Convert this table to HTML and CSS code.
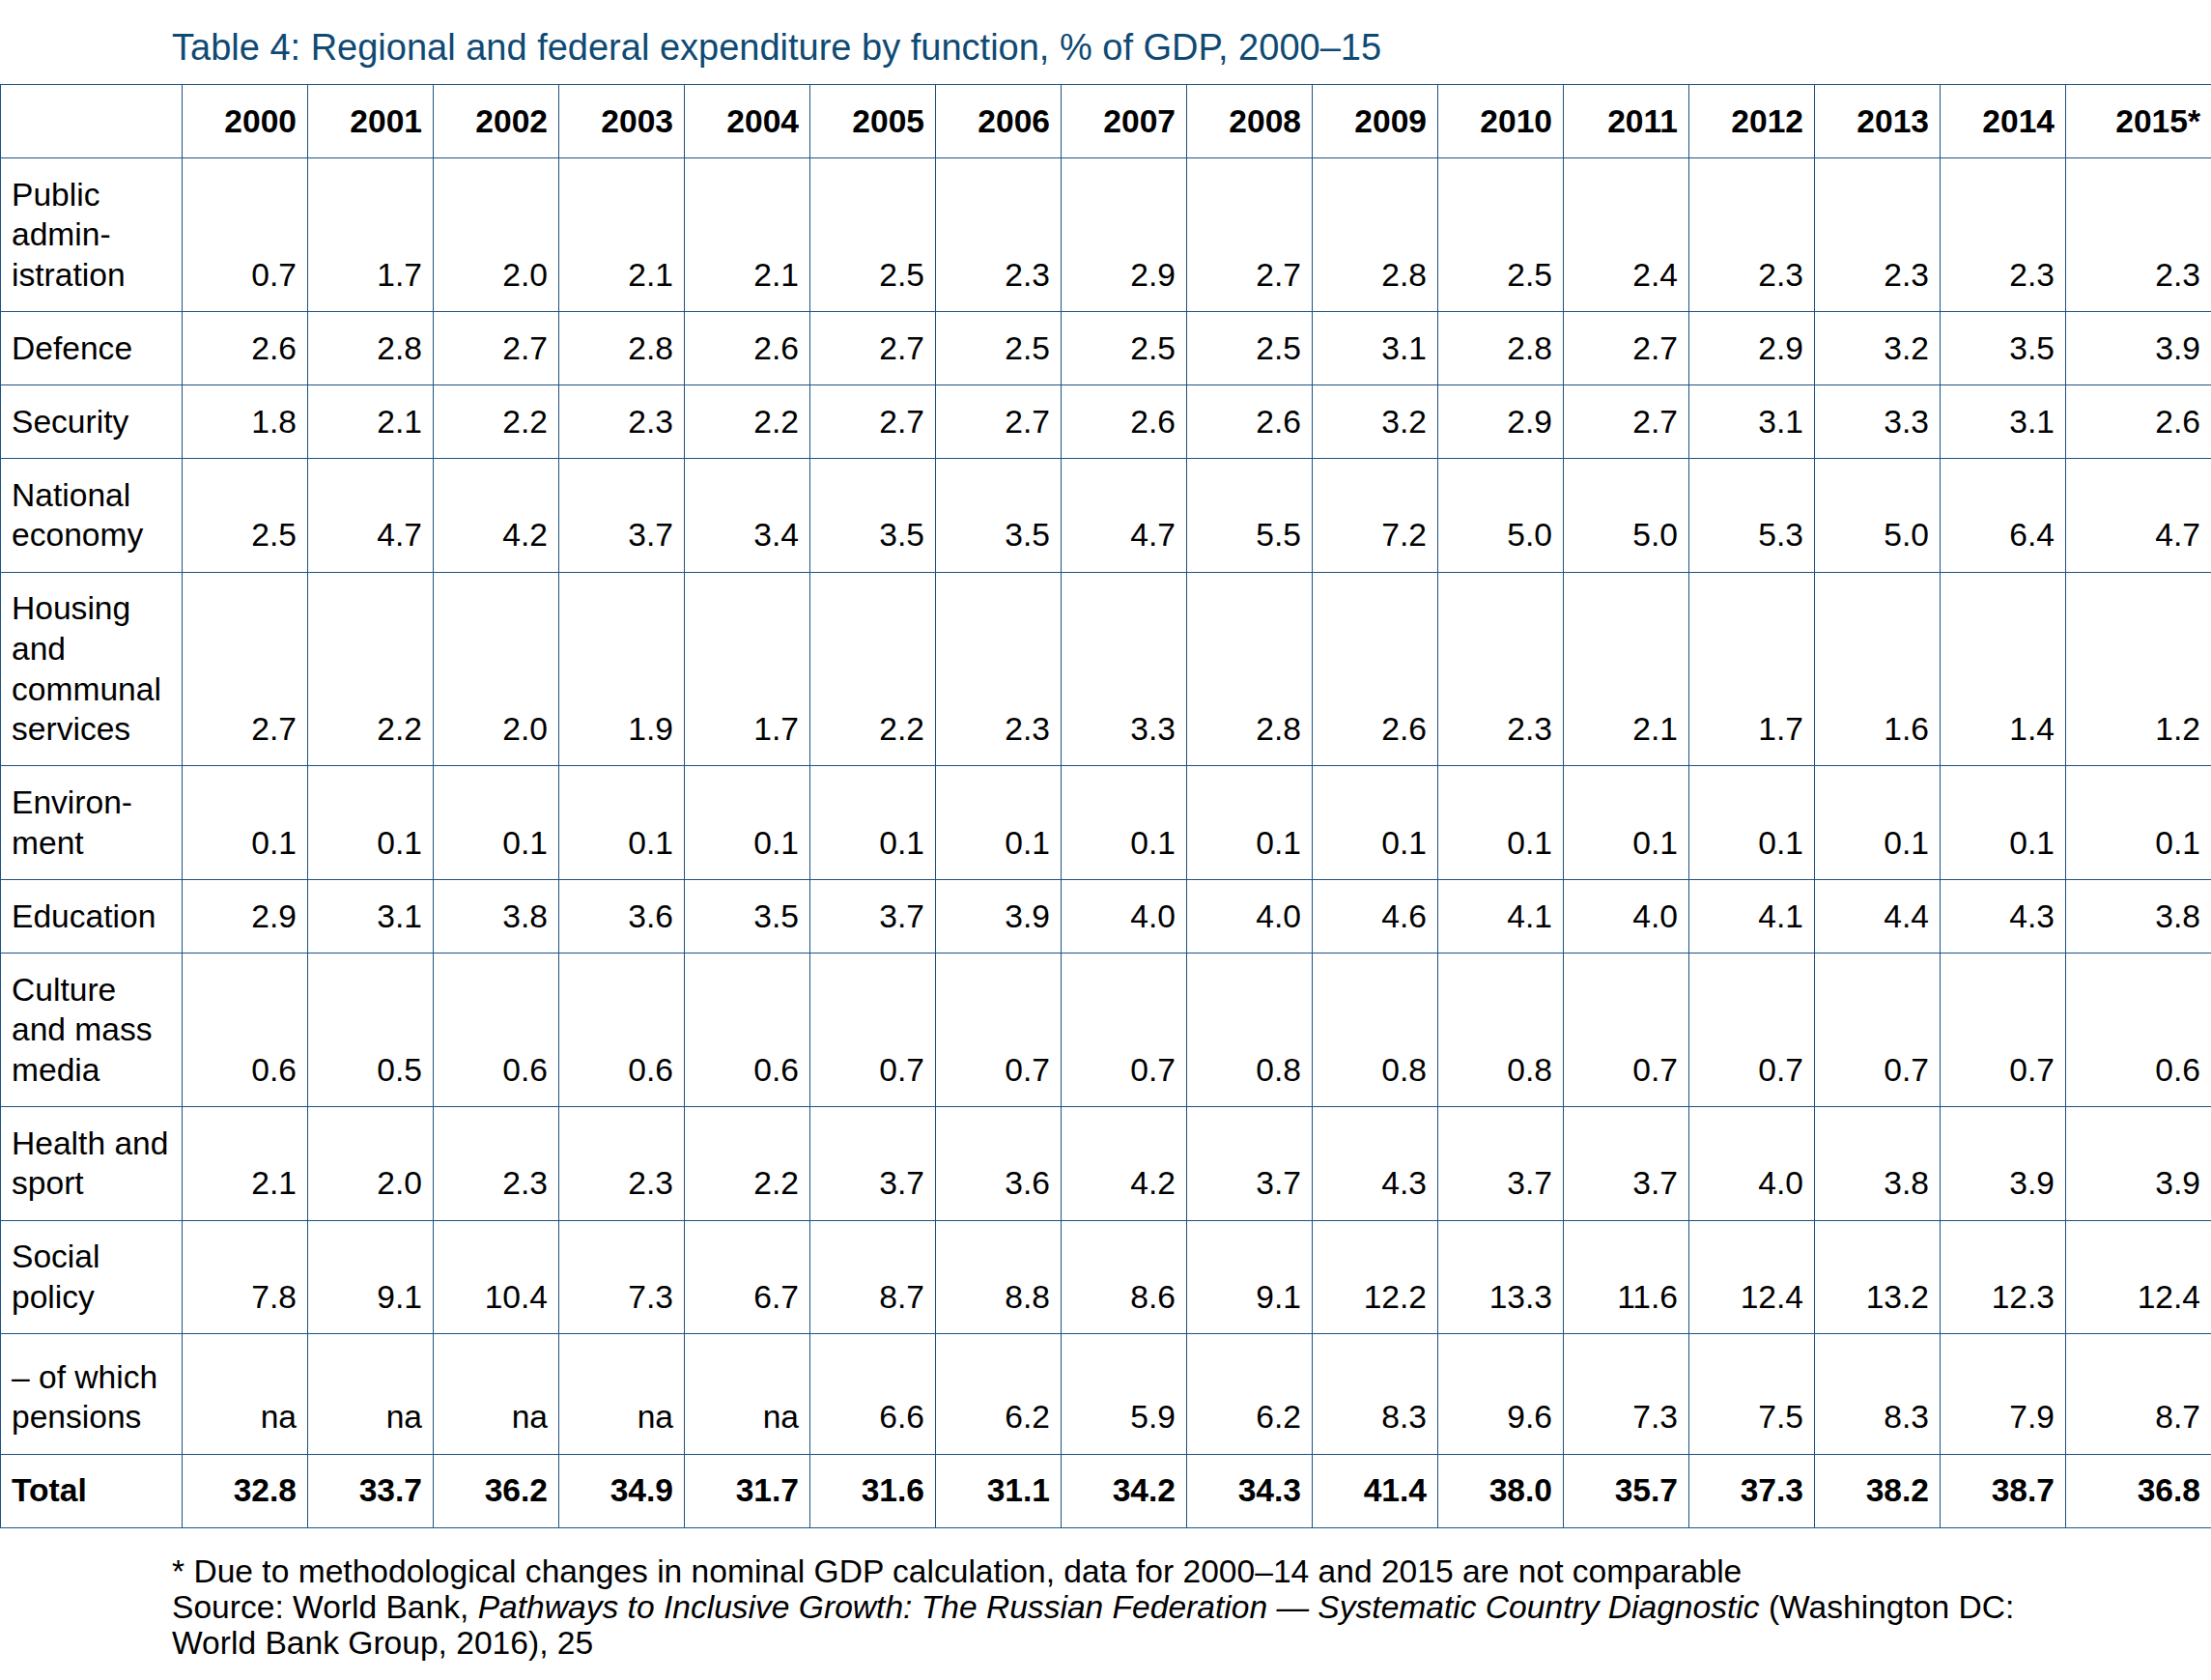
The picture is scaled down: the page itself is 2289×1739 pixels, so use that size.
FILE: index.html
```html
<!DOCTYPE html>
<html lang="en">
<head>
<meta charset="utf-8">
<title>Table 4: Regional and federal expenditure by function</title>
<link rel="stylesheet" href="styles.css">
</head>
<body>
<div class="page">
  <h1 class="caption">Table 4: Regional and federal expenditure by function, % of GDP, 2000–15</h1>
  <table class="data-table">
    <colgroup>
      <col class="col-label">
      <col class="col-year"><col class="col-year"><col class="col-year"><col class="col-year"><col class="col-year">
      <col class="col-year"><col class="col-year"><col class="col-year"><col class="col-year"><col class="col-year">
      <col class="col-year"><col class="col-year"><col class="col-year"><col class="col-year"><col class="col-year">
      <col class="col-last">
    </colgroup>
    <thead>
      <tr class="head-row">
        <th class="label"></th>
        <th>2000</th><th>2001</th><th>2002</th><th>2003</th><th>2004</th><th>2005</th><th>2006</th><th>2007</th>
        <th>2008</th><th>2009</th><th>2010</th><th>2011</th><th>2012</th><th>2013</th><th>2014</th><th>2015*</th>
      </tr>
    </thead>
    <tbody>
      <tr>
        <td class="label">Public<br>admin-<br>istration</td>
        <td>0.7</td><td>1.7</td><td>2.0</td><td>2.1</td><td>2.1</td><td>2.5</td><td>2.3</td><td>2.9</td>
        <td>2.7</td><td>2.8</td><td>2.5</td><td>2.4</td><td>2.3</td><td>2.3</td><td>2.3</td><td>2.3</td>
      </tr>
      <tr>
        <td class="label">Defence</td>
        <td>2.6</td><td>2.8</td><td>2.7</td><td>2.8</td><td>2.6</td><td>2.7</td><td>2.5</td><td>2.5</td>
        <td>2.5</td><td>3.1</td><td>2.8</td><td>2.7</td><td>2.9</td><td>3.2</td><td>3.5</td><td>3.9</td>
      </tr>
      <tr>
        <td class="label">Security</td>
        <td>1.8</td><td>2.1</td><td>2.2</td><td>2.3</td><td>2.2</td><td>2.7</td><td>2.7</td><td>2.6</td>
        <td>2.6</td><td>3.2</td><td>2.9</td><td>2.7</td><td>3.1</td><td>3.3</td><td>3.1</td><td>2.6</td>
      </tr>
      <tr>
        <td class="label">National<br>economy</td>
        <td>2.5</td><td>4.7</td><td>4.2</td><td>3.7</td><td>3.4</td><td>3.5</td><td>3.5</td><td>4.7</td>
        <td>5.5</td><td>7.2</td><td>5.0</td><td>5.0</td><td>5.3</td><td>5.0</td><td>6.4</td><td>4.7</td>
      </tr>
      <tr>
        <td class="label">Housing<br>and<br>communal<br>services</td>
        <td>2.7</td><td>2.2</td><td>2.0</td><td>1.9</td><td>1.7</td><td>2.2</td><td>2.3</td><td>3.3</td>
        <td>2.8</td><td>2.6</td><td>2.3</td><td>2.1</td><td>1.7</td><td>1.6</td><td>1.4</td><td>1.2</td>
      </tr>
      <tr>
        <td class="label">Environ-<br>ment</td>
        <td>0.1</td><td>0.1</td><td>0.1</td><td>0.1</td><td>0.1</td><td>0.1</td><td>0.1</td><td>0.1</td>
        <td>0.1</td><td>0.1</td><td>0.1</td><td>0.1</td><td>0.1</td><td>0.1</td><td>0.1</td><td>0.1</td>
      </tr>
      <tr>
        <td class="label">Education</td>
        <td>2.9</td><td>3.1</td><td>3.8</td><td>3.6</td><td>3.5</td><td>3.7</td><td>3.9</td><td>4.0</td>
        <td>4.0</td><td>4.6</td><td>4.1</td><td>4.0</td><td>4.1</td><td>4.4</td><td>4.3</td><td>3.8</td>
      </tr>
      <tr>
        <td class="label">Culture<br>and mass<br>media</td>
        <td>0.6</td><td>0.5</td><td>0.6</td><td>0.6</td><td>0.6</td><td>0.7</td><td>0.7</td><td>0.7</td>
        <td>0.8</td><td>0.8</td><td>0.8</td><td>0.7</td><td>0.7</td><td>0.7</td><td>0.7</td><td>0.6</td>
      </tr>
      <tr>
        <td class="label">Health and<br>sport</td>
        <td>2.1</td><td>2.0</td><td>2.3</td><td>2.3</td><td>2.2</td><td>3.7</td><td>3.6</td><td>4.2</td>
        <td>3.7</td><td>4.3</td><td>3.7</td><td>3.7</td><td>4.0</td><td>3.8</td><td>3.9</td><td>3.9</td>
      </tr>
      <tr>
        <td class="label">Social<br>policy</td>
        <td>7.8</td><td>9.1</td><td>10.4</td><td>7.3</td><td>6.7</td><td>8.7</td><td>8.8</td><td>8.6</td>
        <td>9.1</td><td>12.2</td><td>13.3</td><td>11.6</td><td>12.4</td><td>13.2</td><td>12.3</td><td>12.4</td>
      </tr>
      <tr class="sub-row">
        <td class="label">– of which<br>pensions</td>
        <td>na</td><td>na</td><td>na</td><td>na</td><td>na</td><td>6.6</td><td>6.2</td><td>5.9</td>
        <td>6.2</td><td>8.3</td><td>9.6</td><td>7.3</td><td>7.5</td><td>8.3</td><td>7.9</td><td>8.7</td>
      </tr>
      <tr class="total-row">
        <td class="label">Total</td>
        <td>32.8</td><td>33.7</td><td>36.2</td><td>34.9</td><td>31.7</td><td>31.6</td><td>31.1</td><td>34.2</td>
        <td>34.3</td><td>41.4</td><td>38.0</td><td>35.7</td><td>37.3</td><td>38.2</td><td>38.7</td><td>36.8</td>
      </tr>
    </tbody>
  </table>
  <div class="notes">
    <p class="note">* Due to methodological changes in nominal GDP calculation, data for 2000–14 and 2015 are not comparable</p>
    <p class="note">Source: World Bank, <em>Pathways to Inclusive Growth: The Russian Federation — Systematic Country Diagnostic</em> (Washington DC: World Bank Group, 2016), 25</p>
  </div>
</div>
</body>
</html>
```

FILE: styles.css
```css
html, body {
  margin: 0;
  padding: 0;
  background: #ffffff;
}

body {
  font-family: "Liberation Sans", Arial, "Helvetica Neue", sans-serif;
  color: #000000;
}

.page {
  width: 2289px;
}

.caption {
  margin: 0 0 16px 0;
  padding: 27px 0 0 178px;
  font-size: 38px;
  line-height: 44px;
  font-weight: normal;
  color: #0f4a74;
}

.data-table {
  width: 2289px;
  table-layout: fixed;
  border-collapse: collapse;
  font-size: 33.6px;
  line-height: 41.6px;
}

.col-label { width: 188px; }
.col-year { width: 130px; }
.col-last { width: 151px; }

.data-table th,
.data-table td {
  border: 1px solid #1d5282;
  padding: 16.7px 11px 16.7px 11px;
  text-align: right;
  vertical-align: bottom;
  white-space: nowrap;
}

.data-table th {
  font-weight: bold;
}

.data-table .label {
  text-align: left;
}

.sub-row td {
  padding-top: 23.7px;
}

.total-row td {
  font-weight: bold;
}

.notes {
  margin: 26px 0 0 178px;
  width: 1960px;
}

.note {
  margin: 0;
  font-size: 33.6px;
  line-height: 37.3px;
}

.note em {
  font-style: italic;
}
```
